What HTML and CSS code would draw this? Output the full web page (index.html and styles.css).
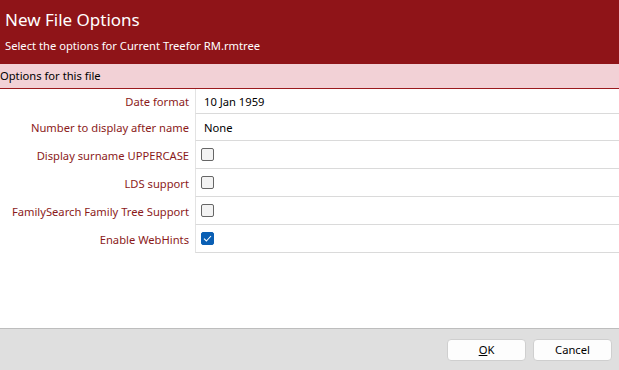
FILE: index.html
```html
<!DOCTYPE html>
<html lang="en">
  <head>
    <meta charset="UTF-8" />
    <meta name="viewport" content="width=device-width, initial-scale=1.0" />
    <title>New File Options</title>
    <link rel="stylesheet" href="styles.css">
  </head>
  <body>
    <div class="dialog">
      <div class="header">
        <h1>New File Options</h1>
        <p>Select the options for Current Treefor RM.rmtree</p>
      </div>

      <div class="section-bar">Options for this file</div>

      <div class="options">
        <div class="label">Date format</div>
        <div class="value short">10 Jan 1959</div>

        <div class="label">Number to display after name</div>
        <div class="value">None</div>

        <div class="label">Display surname UPPERCASE</div>
        <div class="value tall"><span class="check"></span></div>

        <div class="label">LDS support</div>
        <div class="value tall"><span class="check"></span></div>

        <div class="label">FamilySearch Family Tree Support</div>
        <div class="value tall"><span class="check"></span></div>

        <div class="label">Enable WebHints</div>
        <div class="value tall">
          <span class="check checked">
            <svg width="9" height="7" viewBox="0 0 9 7"><path d="M1 3.6 L3.4 6 L8 1" fill="none" stroke="#fff" stroke-width="1.1"/></svg>
          </span>
        </div>
      </div>

      <div class="spacer"></div>

      <div class="footer">
        <button class="btn"><u>O</u>K</button>
        <button class="btn">Cancel</button>
      </div>
    </div>
  </body>
</html>
```

FILE: styles.css
```css
body {
  margin: 0;
  font-family: "Noto Sans", "Open Sans", sans-serif;
  font-size: 11.2px;
  background: #fff;
  color: #000;
}
.dialog {
  display: flex;
  flex-direction: column;
  height: 370px;
}
.header {
  background: #8f1418;
  color: #fff;
  height: 64px;
  box-sizing: border-box;
  padding: 8px 5px 0;
}
.header h1 {
  margin: 0;
  font-size: 17px;
  font-weight: normal;
  line-height: 24px;
}
.header p {
  margin: 6px 0 0;
  font-size: 11.2px;
  line-height: 16px;
}
.section-bar {
  background: #f2d1d6;
  height: 24px;
  line-height: 24px;
  border-bottom: 1px solid #9b1a1e;
}
.options {
  display: grid;
  grid-template-columns: 195px 1fr;
}
.label {
  color: #8b1a1a;
  padding-right: 6px;
  display: flex;
  align-items: center;
  justify-content: flex-end;
}
.value {
  border-left: 1px solid #e3e3e3;
  border-bottom: 1px solid #dadada;
  height: 26px;
  display: flex;
  align-items: center;
  padding-left: 8px;
}
.value.short {
  height: 24px;
}
.value.tall {
  height: 27px;
  padding-left: 5px;
}
.check {
  width: 11px;
  height: 11px;
  border: 1px solid #666;
  border-radius: 2px;
  background: #f3f3f3;
  display: flex;
  align-items: center;
  justify-content: center;
}
.check.checked {
  background: #0a5fb4;
  border-color: #0a5fb4;
}
.spacer {
  flex: 1;
}
.footer {
  background: #dfdfdf;
  border-top: 1px solid #bdbdbd;
  height: 41px;
  display: flex;
  justify-content: flex-end;
  align-items: center;
  gap: 7px;
  padding-right: 7px;
}
.btn {
  width: 79px;
  height: 22px;
  background: #fdfdfd;
  border: 1px solid #cfcfcf;
  border-radius: 4px;
  font-family: "Noto Sans", "Open Sans", sans-serif;
  font-size: 11.2px;
  color: #000;
  padding: 0;
}
```
